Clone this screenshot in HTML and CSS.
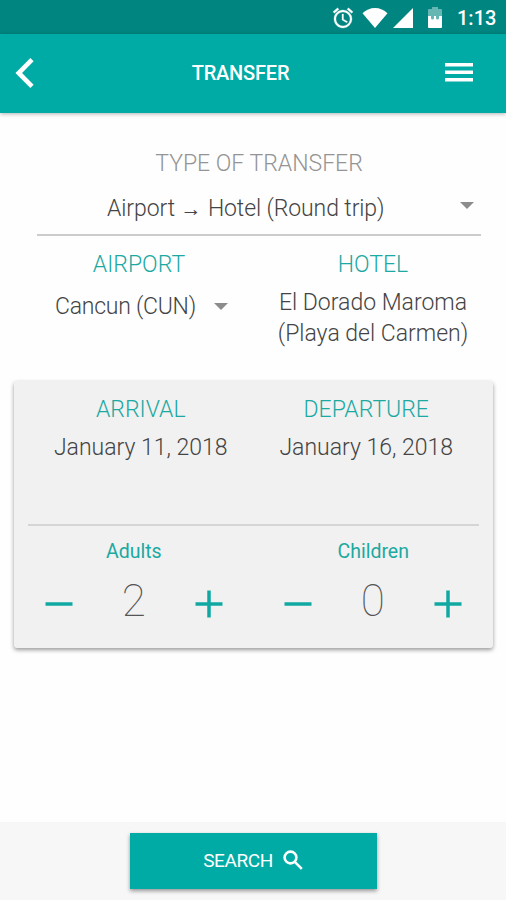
FILE: index.html
```
<!DOCTYPE html>
<html lang="en">

<head>
    <meta charset="UTF-8">
    <meta name="viewport" content="width=device-width, initial-scale=1.0">
    <title>Transfer</title>
    <link rel="stylesheet" href="styles.css">
</head>

<body>
    <div class="status-bar">
        <svg class="alarm" width="24" height="24" viewBox="0 0 24 24" fill="currentColor" stroke="currentColor" stroke-width=".3">
            <path d="M22 5.72l-4.6-3.86-1.29 1.53 4.6 3.86L22 5.72zM7.88 3.39L6.6 1.86 2 5.71l1.29 1.53 4.59-3.85zM12.5 8H11v6l4.75 2.85.75-1.23-4-2.37V8zM12 4c-4.97 0-9 4.03-9 9s4.02 9 9 9a9 9 0 0 0 0-18zm0 16c-3.87 0-7-3.13-7-7s3.13-7 7-7 7 3.13 7 7-3.13 7-7 7z"/>
        </svg>
        <svg class="wifi" width="26" height="20" viewBox="0 0 26 20" fill="currentColor">
            <path d="M.5 5.3C4 2 8.200 0 13 0s9 2 12.500 5.300L13 20z"/>
        </svg>
        <svg class="signal" width="20" height="20" viewBox="0 0 20 20" fill="currentColor">
            <path d="M20 0v20H0z"/>
        </svg>
        <svg class="battery" width="14" height="21" viewBox="0 0 14 21" fill="currentColor">
            <path opacity=".4" d="M4 0h6v2h3a1 1 0 0 1 1 1v11H0V3a1 1 0 0 1 1-1h3z"/>
            <path d="M0 9h3v2a1.500 1.500 0 0 0 3 0V9h2v2a1.500 1.500 0 0 0 3 0V9h3v11a1 1 0 0 1-1 1H1a1 1 0 0 1-1-1z"/>
        </svg>
        <span class="time">1:13</span>
    </div>
    <header class="header">
        <svg class="back" width="20" height="30" viewBox="0 0 20 30" fill="none" stroke="currentColor" stroke-width="4.600">
            <path d="M18 1.700L4.700 15 18 28.300"/>
        </svg>
        <h1 class="title">TRANSFER</h1>
        <svg class="menu" width="28" height="20" viewBox="0 0 28 20" fill="currentColor">
            <path d="M0 0h28v3.600H0zM0 7.500h28v3.600H0zM0 15h28v3.600H0z"/>
        </svg>
    </header>

    <main class="content">
        <section class="transfer">
            <div class="label gray">TYPE OF TRANSFER</div>
            <div class="select">
                <span class="route">Airport <span class="arrow">→</span> Hotel (Round trip)</span>
                <span class="caret"></span>
            </div>
        </section>

        <section class="places">
            <div class="column">
                <div class="label">AIRPORT</div>
                <div class="airport">
                    <span class="airport-name">Cancun (CUN)</span>
                    <span class="caret"></span>
                </div>
            </div>
            <div class="column">
                <div class="label">HOTEL</div>
                <div class="hotel">El Dorado Maroma<br>(Playa del Carmen)</div>
            </div>
        </section>

        <section class="card">
            <div class="dates">
                <div class="column">
                    <div class="label">ARRIVAL</div>
                    <div class="date">January 11, 2018</div>
                </div>
                <div class="column">
                    <div class="label">DEPARTURE</div>
                    <div class="date">January 16, 2018</div>
                </div>
            </div>
            <div class="guests">
                <div class="column">
                    <div class="guest-label">Adults</div>
                    <div class="counter">
                        <svg width="28" height="28" viewBox="0 0 28 28"><path d="M.5 14h27"/></svg>
                        <span class="count">2</span>
                        <svg width="28" height="28" viewBox="0 0 28 28"><path d="M.5 14h27M14 .5v27"/></svg>
                    </div>
                </div>
                <div class="column">
                    <div class="guest-label">Children</div>
                    <div class="counter">
                        <svg width="28" height="28" viewBox="0 0 28 28"><path d="M.5 14h27"/></svg>
                        <span class="count">0</span>
                        <svg width="28" height="28" viewBox="0 0 28 28"><path d="M.5 14h27M14 .5v27"/></svg>
                    </div>
                </div>
            </div>
        </section>
    </main>

    <footer class="footer">
        <button class="search">
            <span class="search-text">SEARCH</span>
            <svg width="20" height="20" viewBox="0 0 20 20" fill="none" stroke="currentColor" stroke-width="2.600">
                <circle cx="7.500" cy="7.500" r="5.900"/>
                <path d="M11.800 11.800l7 7"/>
            </svg>
        </button>
    </footer>
</body>

</html>
```
FILE: styles.css
```
* {
    box-sizing: border-box;
}

body {
    width: 506px;
    height: 900px;
    margin: 0;
    display: flex;
    flex-direction: column;
    background-color: #fefefe;
    font-family: Roboto, "Liberation Sans", sans-serif;
    font-weight: 300;
    font-size: 23px;
    color: #444;
    overflow: hidden;
}

.status-bar {
    height: 34px;
    padding: 1px 11px 0 0;
    display: flex;
    align-items: center;
    justify-content: flex-end;
    background-color: #008580;
    color: white;
}

.wifi {
    margin-left: 7px;
}

.signal {
    margin-left: 5px;
}

.battery {
    margin-left: 15px;
}

.time {
    width: 38px;
    margin-left: 15px;
    font-size: 20px;
    font-weight: 500;
    white-space: nowrap;
}

.header {
    height: 79px;
    padding: 0 33px 2px 14px;
    display: flex;
    align-items: center;
    justify-content: space-between;
    background-color: #00aba5;
    box-shadow: 0 1px 4px rgba(0, 0, 0, 0.3);
    color: white;
}

.title {
    margin: 0 0 0 2px;
    font-size: 20px;
    font-weight: 500;
    letter-spacing: -0.2px;
}

.content {
    flex-grow: 1;
    padding: 34px 13px 0 14px;
}

.label {
    height: 32px;
    line-height: 34px;
    text-align: center;
    color: #1ba9a2;
}

.label.gray {
    color: #949494;
}

.transfer {
    margin: 0 12px 0 23px;
}

.select {
    height: 57px;
    padding: 3px 7px 0 70px;
    display: flex;
    align-items: center;
    justify-content: space-between;
    border-bottom: 2px solid #ccc;
}

.select .caret {
    margin-bottom: 6px;
}

.route {
    letter-spacing: -0.1px;
}

.arrow {
    margin-right: 1px;
    font-size: 21px;
}

.caret {
    border: 7px solid transparent;
    border-top-color: #8c8c8c;
    border-bottom: 0;
}

.places {
    height: 145px;
    padding: 12px 3px 0 8px;
    display: flex;
}

.column {
    flex: 1;
}

.airport {
    height: 52px;
    padding-left: 33px;
    display: flex;
    align-items: center;
    gap: 18px;
}

.airport-name {
    letter-spacing: -0.25px;
}

.hotel {
    padding-top: 7px;
    line-height: 31px;
    text-align: center;
    white-space: nowrap;
}

.card {
    height: 267px;
    border-radius: 3px;
    background-color: #f1f1f1;
    box-shadow: 0 2px 4px rgba(0, 0, 0, 0.4);
}

.dates {
    height: 145px;
    margin: 0 14px;
    padding-top: 12px;
    display: flex;
    border-bottom: 2px solid #d5d5d5;
}

.date {
    line-height: 46px;
    text-align: center;
}

.guests {
    display: flex;
}

.guest-label {
    padding-top: 11px;
    line-height: 30px;
    font-size: 19.5px;
    font-weight: 400;
    text-align: center;
    color: #1ba9a2;
}

.counter {
    height: 60px;
    margin-top: 4px;
    padding: 0 31px;
    display: flex;
    align-items: center;
    justify-content: space-between;
}

.counter svg {
    margin-top: 6px;
    stroke: #10a9a2;
    stroke-width: 3.5;
}

/* minus sits a pixel further out in the second column */
.column + .column .counter {
    padding-left: 30px;
}

.count {
    font-size: 44px;
    font-weight: 100;
    color: #555;
}

.footer {
    height: 78px;
    padding-top: 11px;
    display: flex;
    justify-content: center;
    background-color: #f7f7f7;
}

.search {
    width: 247px;
    height: 56px;
    padding: 0 0 2px;
    display: flex;
    align-items: center;
    justify-content: center;
    gap: 10px;
    border: none;
    background-color: #00aba5;
    box-shadow: 0 2px 4px rgba(0, 0, 0, 0.4);
    color: white;
    font-family: inherit;
    font-size: 19px;
    font-weight: 400;
    letter-spacing: -0.4px;
}
```
